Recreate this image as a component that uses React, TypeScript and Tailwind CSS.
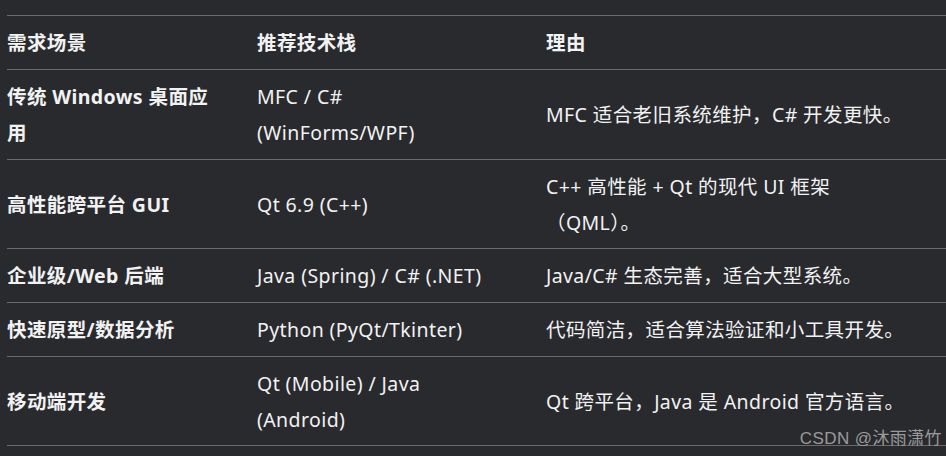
import React from "react";

const rows: { a: React.ReactNode; b: React.ReactNode; c: React.ReactNode; tight?: boolean }[] = [
  {
    a: (
      <>
        传统 Windows 桌面应
        <br />用
      </>
    ),
    b: (
      <>
        MFC / C#
        <br />
        (WinForms/WPF)
      </>
    ),
    c: "MFC 适合老旧系统维护，C# 开发更快。",
  },
  {
    a: "高性能跨平台 GUI",
    b: "Qt 6.9 (C++)",
    c: (
      <>
        C++ 高性能 + Qt 的现代 UI 框架
        <br />
        （QML）。
      </>
    ),
    tight: true,
  },
  {
    a: "企业级/Web 后端",
    b: "Java (Spring) / C# (.NET)",
    c: "Java/C# 生态完善，适合大型系统。",
  },
  {
    a: "快速原型/数据分析",
    b: "Python (PyQt/Tkinter)",
    c: "代码简洁，适合算法验证和小工具开发。",
  },
  {
    a: "移动端开发",
    b: (
      <>
        Qt (Mobile) / Java
        <br />
        (Android)
      </>
    ),
    c: "Qt 跨平台，Java 是 Android 官方语言。",
    tight: true,
  },
];

export default function App() {
  return (
    <div
      className="relative w-[946px] h-[456px] overflow-hidden bg-[#292a2e] text-[#f2f2f2] text-[19.5px] leading-[36px] tracking-[0.4px]"
      style={{ fontFamily: '"Noto Sans", "Noto Sans CJK SC", sans-serif' }}
    >
      <div className="ml-[7px] mt-[15px] border-t border-[#6a6a6a]">
        <div className="grid grid-cols-[250px_289px_1fr] border-b border-[#6a6a6a] font-bold">
          <div className="pt-[9px] pb-[8px]">需求场景</div>
          <div className="pt-[9px] pb-[8px]">推荐技术栈</div>
          <div className="pt-[9px] pb-[8px]">理由</div>
        </div>
        {rows.map((r, i) => (
          <div
            key={i}
            className={
              r.tight
                ? "grid grid-cols-[250px_289px_1fr] border-b border-[#6a6a6a] items-center pt-[9px] pb-[7px]"
                : "grid grid-cols-[250px_289px_1fr] border-b border-[#6a6a6a] items-center pt-[9px] pb-[8px]"
            }
          >
            <div className="font-bold whitespace-nowrap">{r.a}</div>
            <div className="whitespace-nowrap">{r.b}</div>
            <div className="whitespace-nowrap">{r.c}</div>
          </div>
        ))}
      </div>
      <div
        className="absolute right-[4px] top-[427px] text-[17px] leading-[24px] text-[#9a9a9a]"
        style={{ fontFamily: '"Liberation Sans", "Noto Sans CJK SC", sans-serif' }}
      >
        CSDN @沐雨潇竹
      </div>
    </div>
  );
}
